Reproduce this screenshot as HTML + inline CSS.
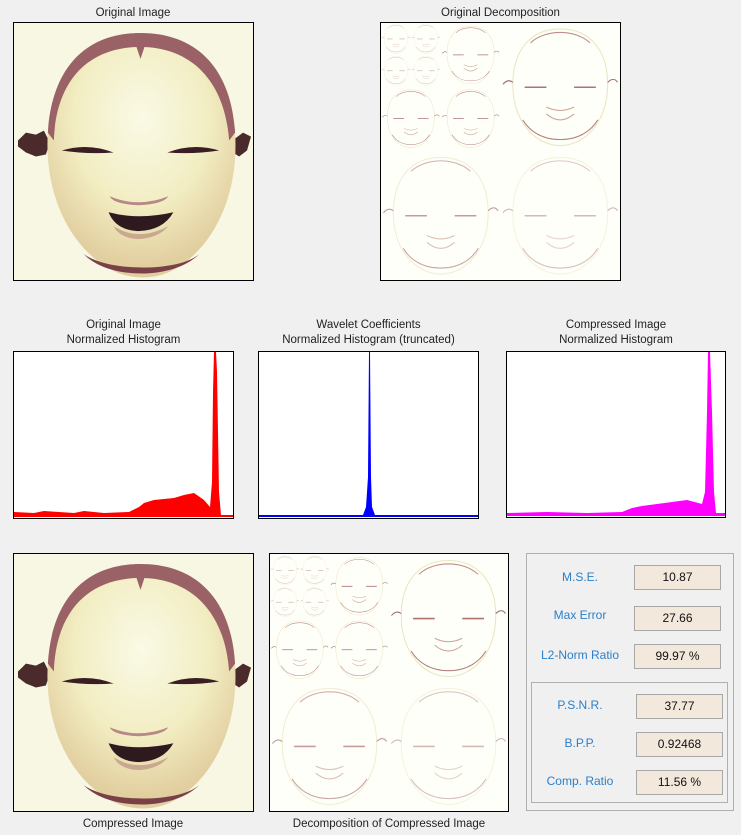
<!DOCTYPE html>
<html><head><meta charset="utf-8"><style>
body{margin:0;background:#f0f0f0;width:741px;height:835px;position:relative;overflow:hidden;font-family:"Liberation Sans",sans-serif;font-size:11.5px;color:#222}
.t{position:absolute;text-align:center;line-height:15px;white-space:nowrap}
.ax{position:absolute;border:1px solid #000;background:#fff;box-sizing:border-box;overflow:hidden}
.lb{position:absolute;color:#2a7fc8;font-size:12px;text-align:center;width:90px}
.vb{position:absolute;width:87px;height:25px;background:#f3e8dc;border:1px solid #a8a8a8;box-sizing:border-box;text-align:center;line-height:23px;color:#111;font-size:12px}
</style></head><body>
<svg width="0" height="0" style="position:absolute">
<defs>
<radialGradient id="fg" cx="0.5" cy="0.35" r="0.6">
<stop offset="0" stop-color="#fafae6"/><stop offset="0.6" stop-color="#f2edc2"/><stop offset="1" stop-color="#e2cfa0"/>
</radialGradient>
<symbol id="face" viewBox="0 0 240 258">
<rect width="240" height="258" fill="#f7f7e4"/>
<path d="M4 118 l8-8 10 2 8-4 6 12-4 12-10 2-10-4-8-6z" fill="#4a2a2a"/>
<path d="M222 116 l8-6 8 4-4 14-8 6-6-4z" fill="#4a2a2a"/>
<path d="M127 10 C72 10 38 45 34 110 C30 170 55 225 98 248 C117 258 142 258 160 248 C202 225 226 170 222 110 C218 45 183 10 127 10z" fill="url(#fg)"/>
<path d="M127 10 C72 10 38 45 34 110 L40 118 C42 60 72 26 123 24 L127 36 L131 24 C180 26 212 60 216 118 L222 110 C218 45 183 10 127 10z" fill="#9a6266"/>
<path d="M70 232 C95 258 160 258 186 232 C165 250 95 250 70 232z" fill="#7a4048"/>
<path d="M48 128 Q74 120 100 130 Q74 132 48 128z" fill="#3a1e24"/>
<path d="M154 130 Q180 120 206 128 Q180 132 154 130z" fill="#3a1e24"/>
<path d="M96 174 Q125 186 155 174 Q150 182 125 183 Q100 182 96 174z" fill="#b88888"/>
<path d="M95 190 Q125 198 160 190 Q150 208 125 209 Q102 208 95 190z" fill="#2e1a1e"/>
<path d="M100 204 Q125 220 155 204 Q145 216 125 217 Q106 216 100 204z" fill="#c9a890"/>
</symbol>
<symbol id="fo" viewBox="0 0 120 130">
<g fill="none" stroke-width="1.1">
<path d="M60 6 C28 6 12 30 12 62 C12 100 35 124 60 124 C85 124 108 100 108 62 C108 30 92 6 60 6z" stroke="#e6e0b4"/>
<path d="M30 20 C45 6 75 6 90 20" stroke="#b07070"/>
<path d="M60 118 C40 118 28 108 22 98 M60 118 C80 118 92 108 98 98" stroke="#a06060"/>
<path d="M24 65 h22 M74 65 h22" stroke="#9a5050" stroke-width="1.6"/>
<path d="M46 85 Q60 92 74 85 M46 92 Q60 104 74 92" stroke="#c09080"/>
<path d="M2 62 q5-6 10-2 M108 60 q6-6 10 0" stroke="#805050"/>
</g>
</symbol>
<symbol id="dec" viewBox="0 0 240 258">
<rect width="240" height="258" fill="#fffffa"/>
<g opacity="0.8">
<use href="#fo" x="0" y="0" width="30" height="32"/>
<use href="#fo" x="30" y="0" width="30" height="32"/>
<use href="#fo" x="0" y="32" width="30" height="32"/>
<use href="#fo" x="30" y="32" width="30" height="32"/>
<use href="#fo" x="60" y="0" width="60" height="64"/>
<use href="#fo" x="0" y="64" width="60" height="64"/>
<use href="#fo" x="60" y="64" width="60" height="64"/>
<use href="#fo" x="120" y="0" width="120" height="129"/>
<use href="#fo" x="0" y="129" width="120" height="129" opacity="0.7"/>
<use href="#fo" x="120" y="129" width="120" height="129" opacity="0.5"/>
</g>
</symbol>
</defs></svg>

<div class="t" style="left:13px;width:240px;top:6px">Original Image</div>
<div class="ax" style="left:13px;top:22px;width:241px;height:259px"><svg width="239" height="257"><use href="#face" width="239" height="257"/></svg></div>

<div class="t" style="left:380px;width:241px;top:6px">Original Decomposition</div>
<div class="ax" style="left:380px;top:22px;width:241px;height:259px"><svg width="239" height="257"><use href="#dec" width="239" height="257"/></svg></div>

<div class="t" style="left:13px;width:221px;top:318px">Original Image<br>Normalized Histogram</div>
<div class="ax" style="left:13px;top:351px;width:221px;height:168px">
<svg width="219" height="166"><path d="M0 165 L0 160 L20 161 L30 159 L60 161 L70 159 L90 161 L115 160 L125 155 L130 151 L140 148 L160 146 L170 143 L180 141 L190 148 L196 155 L198 130 L199 40 L200 0 L202 0 L203 20 L205 140 L207 163 L219 163 L219 165z" fill="#f00"/></svg></div>

<div class="t" style="left:258px;width:221px;top:318px">Wavelet Coefficients<br>Normalized Histogram (truncated)</div>
<div class="ax" style="left:258px;top:351px;width:221px;height:168px">
<svg width="219" height="166"><path d="M0 165 L0 163 L104 163 L107 155 L109 125 L110 0 L111 0 L112 125 L113 155 L116 163 L219 163 L219 165z" fill="#00f"/></svg></div>

<div class="t" style="left:506px;width:220px;top:318px">Compressed Image<br>Normalized Histogram</div>
<div class="ax" style="left:506px;top:351px;width:220px;height:167px">
<svg width="218" height="165"><path d="M0 164 L0 161 L40 160 L80 161 L115 160 L125 156 L135 154 L150 152 L165 150 L180 148 L195 152 L198 140 L200 60 L201 0 L203 0 L205 60 L207 140 L209 161 L218 161 L218 164z" fill="#f0f"/></svg></div>

<div class="ax" style="left:13px;top:553px;width:241px;height:259px"><svg width="239" height="257"><use href="#face" width="239" height="257"/></svg></div>
<div class="t" style="left:13px;width:240px;top:817px">Compressed Image</div>

<div class="ax" style="left:269px;top:553px;width:240px;height:259px"><svg width="238" height="257"><use href="#dec" width="238" height="257"/></svg></div>
<div class="t" style="left:269px;width:240px;top:817px">Decomposition of Compressed Image</div>

<div style="position:absolute;left:526px;top:553px;width:208px;height:258px;border:1px solid #b0b0b0;box-sizing:border-box"></div>
<div style="position:absolute;left:531px;top:682px;width:197px;height:121px;border:1px solid #b0b0b0;box-sizing:border-box"></div>

<div class="lb" style="left:535px;top:570px">M.S.E.</div>
<div class="vb" style="left:634px;top:565px">10.87</div>
<div class="lb" style="left:535px;top:608px">Max Error</div>
<div class="vb" style="left:634px;top:606px">27.66</div>
<div class="lb" style="left:535px;top:648px">L2-Norm Ratio</div>
<div class="vb" style="left:634px;top:644px">99.97 %</div>
<div class="lb" style="left:535px;top:698px">P.S.N.R.</div>
<div class="vb" style="left:636px;top:694px">37.77</div>
<div class="lb" style="left:535px;top:736px">B.P.P.</div>
<div class="vb" style="left:636px;top:732px">0.92468</div>
<div class="lb" style="left:535px;top:774px">Comp. Ratio</div>
<div class="vb" style="left:636px;top:770px">11.56 %</div>
</body></html>
